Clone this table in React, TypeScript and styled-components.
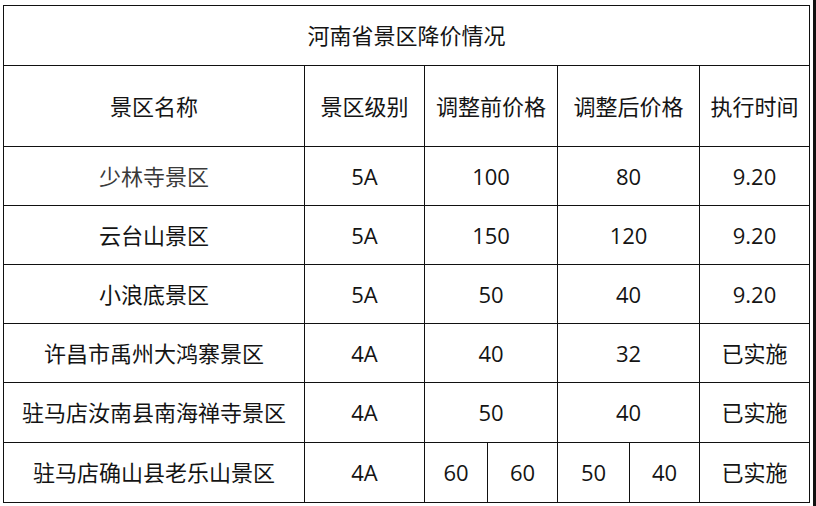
import React from 'react';
import styled, { createGlobalStyle } from 'styled-components';

const GlobalStyle = createGlobalStyle`
  html, body {
    margin: 0;
    padding: 0;
    background: #ffffff;
  }
`;

type Row = {
  name: string;
  level: string;
  before: string[];
  after: string[];
  time: string;
  muted?: boolean;
};

const rows: Row[] = [
  { name: '少林寺景区', level: '5A', before: ['100'], after: ['80'], time: '9.20', muted: true },
  { name: '云台山景区', level: '5A', before: ['150'], after: ['120'], time: '9.20' },
  { name: '小浪底景区', level: '5A', before: ['50'], after: ['40'], time: '9.20' },
  { name: '许昌市禹州大鸿寨景区', level: '4A', before: ['40'], after: ['32'], time: '已实施' },
  { name: '驻马店汝南县南海禅寺景区', level: '4A', before: ['50'], after: ['40'], time: '已实施' },
  { name: '驻马店确山县老乐山景区', level: '4A', before: ['60', '60'], after: ['50', '40'], time: '已实施' },
];

const rowHeights = [59, 59, 59, 59, 60, 60];

export default function App() {
  return (
    <>
      <GlobalStyle />
      <Page>
        <Sheet>
          <Table>
            <colgroup>
              <col style={{ width: 301 }} />
              <col style={{ width: 120 }} />
              <col style={{ width: 63 }} />
              <col style={{ width: 70 }} />
              <col style={{ width: 72 }} />
              <col style={{ width: 70 }} />
              <col style={{ width: 110 }} />
            </colgroup>
            <tbody>
              <Tr $h={60}>
                <Cell colSpan={7}>河南省景区降价情况</Cell>
              </Tr>
              <Tr $h={81}>
                <Cell>景区名称</Cell>
                <Cell>景区级别</Cell>
                <Cell colSpan={2}>调整前价格</Cell>
                <Cell colSpan={2}>调整后价格</Cell>
                <Cell>执行时间</Cell>
              </Tr>
              {rows.map((r, i) => (
                <Tr key={i} $h={rowHeights[i]}>
                  <Cell $muted={r.muted}>{r.name}</Cell>
                  <Cell>{r.level}</Cell>
                  {r.before.length === 1 ? (
                    <Cell colSpan={2}>{r.before[0]}</Cell>
                  ) : (
                    r.before.map((v, j) => <Cell key={j}>{v}</Cell>)
                  )}
                  {r.after.length === 1 ? (
                    <Cell colSpan={2}>{r.after[0]}</Cell>
                  ) : (
                    r.after.map((v, j) => <Cell key={j}>{v}</Cell>)
                  )}
                  <Cell>{r.time}</Cell>
                </Tr>
              ))}
            </tbody>
          </Table>
        </Sheet>
        <Edge />
      </Page>
    </>
  );
}

const Page = styled.div`
  display: flex;
  width: 816px;
  height: 506px;
  background: #ffffff;
`;

const Sheet = styled.div`
  flex: 1 0 0;
  padding: 5px 0 0 3px;
`;

const Edge = styled.div`
  width: 3px;
  align-self: stretch;
  background: #111111;
`;

const Table = styled.table`
  width: 807px;
  table-layout: fixed;
  border-collapse: collapse;
`;

const Tr = styled.tr<{ $h: number }>`
  height: ${(p) => p.$h}px;
`;

const Cell = styled.td<{ $muted?: boolean }>`
  padding: 0;
  border: 1px solid #111111;
  text-align: center;
  vertical-align: middle;
  color: ${(p) => (p.$muted ? '#3a3a3a' : '#141414')};
  font-family: "Open Sans", "Noto Sans CJK SC", sans-serif;
  font-size: 22px;
  font-weight: 400;
  white-space: nowrap;
  line-height: 1.2;
`;
